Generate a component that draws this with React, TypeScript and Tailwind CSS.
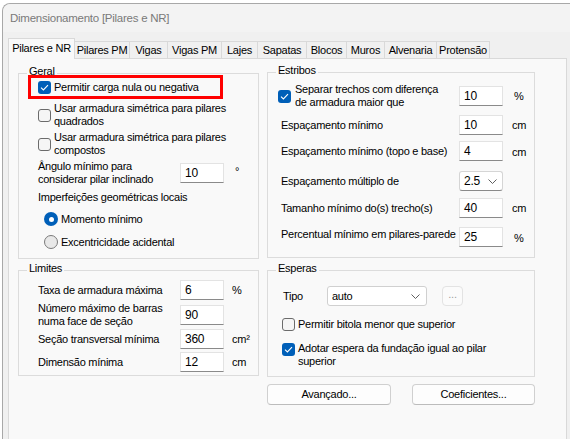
import React from 'react';

const FONT = "font-['Liberation_Sans',Arial,sans-serif] tracking-[-0.25px]";

function CheckBox({ checked }: { checked?: boolean }) {
  if (checked) {
    return (
      <span className="flex h-[13px] w-[13px] shrink-0 items-center justify-center rounded-[3px] bg-[#005fb8]">
        <svg width="9" height="7" viewBox="0 0 9 7">
          <path d="M1 3.6 L3.4 6 L8 1.2" fill="none" stroke="#ffffff" strokeWidth="1.1" />
        </svg>
      </span>
    );
  }
  return <span className="h-[13px] w-[13px] shrink-0 rounded-[3px] border border-[#6b6b6b] bg-[#f5f5f5]" />;
}

function Radio({ selected }: { selected?: boolean }) {
  if (selected) {
    return (
      <span className="flex h-[14px] w-[14px] shrink-0 items-center justify-center rounded-full bg-[#005fb8]">
        <span className="h-[5px] w-[5px] rounded-full bg-white" />
      </span>
    );
  }
  return <span className="h-[14px] w-[14px] shrink-0 rounded-full border border-[#7a7a7a] bg-[#e8e8e8]" />;
}

function Chevron() {
  return (
    <svg width="9" height="5" viewBox="0 0 9 5" className="shrink-0">
      <polyline points="0.5,0.5 4.5,4.5 8.5,0.5" fill="none" stroke="#5f5f5f" strokeWidth="1" />
    </svg>
  );
}

function TextBox({ value }: { value: string }) {
  return (
    <div className="flex h-[20px] w-[44px] shrink-0 items-center border border-[#e3e3e3] border-b-[#8a8a8a] bg-white pl-[4px] text-[12px]">
      {value}
    </div>
  );
}

function GroupBox({ title, className, children }: { title: string; className: string; children: React.ReactNode }) {
  return (
    <div className={`relative border border-[#dcdcdc] ${className}`}>
      <span className="absolute left-[8px] top-[-10px] bg-[#f9f9f9] px-[2px] leading-[14px]">{title}</span>
      {children}
    </div>
  );
}

const tabs = [
  { label: 'Pilares e NR', w: 'w-[67px]' },
  { label: 'Pilares PM', w: 'w-[55px]' },
  { label: 'Vigas', w: 'w-[38px]' },
  { label: 'Vigas PM', w: 'w-[54px]' },
  { label: 'Lajes', w: 'w-[36px]' },
  { label: 'Sapatas', w: 'w-[49px]' },
  { label: 'Blocos', w: 'w-[40px]' },
  { label: 'Muros', w: 'w-[38px]' },
  { label: 'Alvenaria', w: 'w-[52px]' },
  { label: 'Protensão', w: 'w-[53px]' },
];

export default function App() {
  return (
    <div className={`h-[439px] w-[570px] overflow-hidden whitespace-nowrap bg-white pl-[2px] pt-[3px] text-[11px] leading-[13px] text-black ${FONT}`}>
      <div className="h-[436px] rounded-tl-[8px] border-l border-t border-[#a8a8a8] bg-[#f0f0f0]">
        {/* Title bar */}
        <div className="flex h-[28px] items-center rounded-tl-[8px] bg-[#f3f3f3] pl-[7px] text-[11.5px] text-[#7a7a7a]">
          Dimensionamento [Pilares e NR]
        </div>

        {/* Tabs */}
        <div className="relative z-10 ml-[5px] mt-[6px] flex h-[21px] items-end">
          {tabs.map((t, i) =>
            i === 0 ? (
              <div key={t.label} className={`${t.w} flex h-[21px] items-center justify-center border-x border-t border-[#d9d9d9] bg-[#f9f9f9] pb-[2px]`}>
                {t.label}
              </div>
            ) : (
              <div key={t.label} className={`${t.w} flex h-[18px] items-center justify-center border-b border-r border-t border-[#d9d9d9] bg-[#f0f0f0]`}>
                {t.label}
              </div>
            )
          )}
        </div>

        {/* Tab page */}
        <div className="-mt-px ml-[5px] flex h-[390px] w-[559px] items-start gap-[8px] border border-[#d9d9d9] bg-[#f9f9f9] pl-[9px] pt-[13px]">
          {/* Left column */}
          <div className="mt-[1px] flex w-[241px] flex-col">
            <GroupBox title="Geral" className="h-[186px]">
              <div className="relative ml-[9px] mt-[1px] flex h-[24px] w-[195px] items-center gap-[3px] border-[3px] border-[#ff0000] pl-[7px]">
                <CheckBox checked />
                <span>Permitir carga nula ou negativa</span>
              </div>
              <div className="ml-[19px] mt-[3px] flex items-center gap-[3px]">
                <CheckBox />
                <span>
                  Usar armadura simétrica para pilares
                  <br />
                  quadrados
                </span>
              </div>
              <div className="ml-[19px] mt-[3px] flex items-center gap-[3px]">
                <CheckBox />
                <span>
                  Usar armadura simétrica para pilares
                  <br />
                  compostos
                </span>
              </div>
              <div className="ml-[19px] mt-[5px] flex h-[22px] items-center">
                <span className="w-[142px]">
                  Ângulo mínimo para
                  <br />
                  considerar pilar inclinado
                </span>
                <TextBox value="10" />
                <span className="ml-[11px] self-start pt-[3px]">°</span>
              </div>
              <div className="ml-[19px] mt-[5px] leading-[16px]">Imperfeições geométricas locais</div>
              <div className="ml-[25px] mt-[4px] flex h-[20px] items-center gap-[3px]">
                <Radio selected />
                <span>Momento mínimo</span>
              </div>
              <div className="ml-[25px] mt-[3px] flex h-[20px] items-center gap-[3px]">
                <Radio />
                <span>Excentricidade acidental</span>
              </div>
            </GroupBox>

            <GroupBox title="Limites" className="mt-[11px] h-[106px]">
              <div className="ml-[19px] mt-[9px] flex h-[20px] items-center">
                <span className="w-[142px]">Taxa de armadura máxima</span>
                <TextBox value="6" />
                <span className="ml-[8px]">%</span>
              </div>
              <div className="ml-[19px] mt-[4px] flex h-[22px] items-center">
                <span className="w-[142px]">
                  Número máximo de barras
                  <br />
                  numa face de seção
                </span>
                <TextBox value="90" />
              </div>
              <div className="ml-[19px] mt-[3px] flex h-[20px] items-center">
                <span className="w-[142px]">Seção transversal mínima</span>
                <TextBox value="360" />
                <span className="ml-[8px]">cm²</span>
              </div>
              <div className="ml-[19px] mt-[3px] flex h-[20px] items-center">
                <span className="w-[142px]">Dimensão mínima</span>
                <TextBox value="12" />
                <span className="ml-[8px]">cm</span>
              </div>
            </GroupBox>
          </div>

          {/* Right column */}
          <div className="flex w-[268px] flex-col">
            <GroupBox title="Estribos" className="h-[186px]">
              <div className="ml-[10px] mt-[12px] flex h-[22px] items-center">
                <CheckBox checked />
                <span className="ml-[4px] w-[164px]">
                  Separar trechos com diferença
                  <br />
                  de armadura maior que
                </span>
                <TextBox value="10" />
                <span className="ml-[11px]">%</span>
              </div>
              <div className="ml-[13px] mt-[8px] flex h-[20px] items-center">
                <span className="w-[178px]">Espaçamento mínimo</span>
                <TextBox value="10" />
                <span className="ml-[9px]">cm</span>
              </div>
              <div className="ml-[13px] mt-[6px] flex h-[20px] items-center">
                <span className="w-[178px]">Espaçamento mínimo (topo e base)</span>
                <TextBox value="4" />
                <span className="ml-[9px] pt-[3px]">cm</span>
              </div>
              <div className="ml-[13px] mt-[10px] flex h-[20px] items-center">
                <span className="w-[178px]">Espaçamento múltiplo de</span>
                <div className="flex h-[20px] w-[44px] items-center justify-between rounded-[3px] border border-[#d5d5d5] border-b-[#8a8a8a] bg-white pl-[4px] pr-[5px] text-[12px]">
                  <span>2.5</span>
                  <Chevron />
                </div>
              </div>
              <div className="ml-[13px] mt-[7px] flex h-[20px] items-center">
                <span className="w-[178px]">Tamanho mínimo do(s) trecho(s)</span>
                <TextBox value="40" />
                <span className="ml-[9px]">cm</span>
              </div>
              <div className="ml-[13px] mt-[9px] flex h-[20px] items-center">
                <span className="w-[178px] self-start leading-[14px]">Percentual mínimo em pilares-parede</span>
                <TextBox value="25" />
                <span className="ml-[11px] pt-[2px]">%</span>
              </div>
            </GroupBox>

            <GroupBox title="Esperas" className="mt-[12px] h-[107px]">
              <div className="ml-[15px] mt-[15px] flex h-[20px] items-center">
                <span className="w-[44px]">Tipo</span>
                <div className="flex h-[20px] w-[100px] items-center justify-between rounded-[3px] border border-[#d0d0d0] bg-white pl-[4px] pr-[6px]">
                  <span>auto</span>
                  <Chevron />
                </div>
                <div className="ml-[15px] flex h-[20px] w-[21px] items-center justify-center rounded-[4px] border border-[#e3e3e3] bg-[#fbfbfb] pb-[3px] text-[#a0a0a0]">
                  ...
                </div>
              </div>
              <div className="ml-[14px] mt-[10px] flex h-[16px] items-center gap-[3px]">
                <CheckBox />
                <span>Permitir bitola menor que superior</span>
              </div>
              <div className="ml-[14px] mt-[10px] flex items-start gap-[3px]">
                <span className="mt-[1px]">
                  <CheckBox checked />
                </span>
                <span>
                  Adotar espera da fundação igual ao pilar
                  <br />
                  superior
                </span>
              </div>
            </GroupBox>

            <div className="mt-[7px] flex gap-[21px]">
              <button className="flex h-[21px] w-[124px] items-center justify-center rounded-[4px] border border-[#d0d0d0] border-b-[#bcbcbc] bg-[#fdfdfd]">
                Avançado...
              </button>
              <button className="flex h-[21px] w-[123px] items-center justify-center rounded-[4px] border border-[#d0d0d0] border-b-[#bcbcbc] bg-[#fdfdfd]">
                Coeficientes...
              </button>
            </div>
          </div>
        </div>
      </div>
    </div>
  );
}
